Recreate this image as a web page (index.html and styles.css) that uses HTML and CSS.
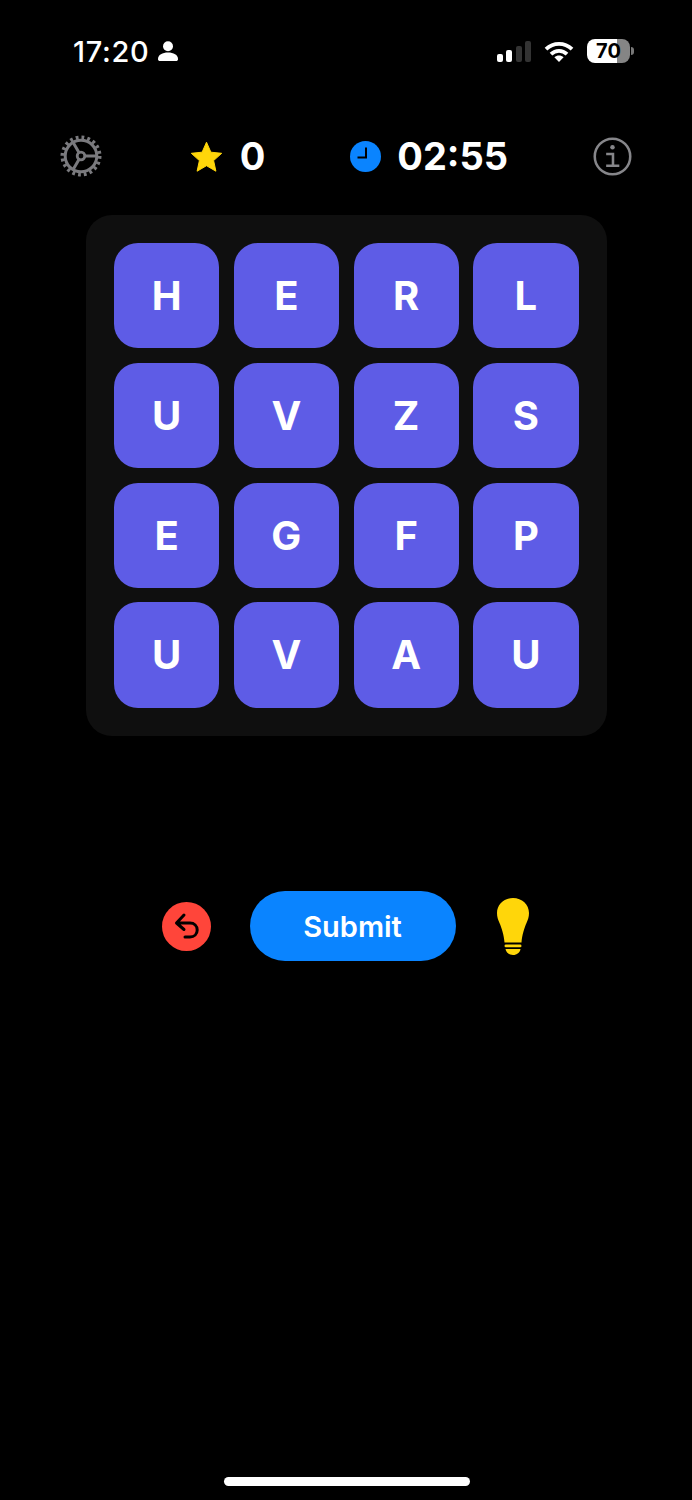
FILE: index.html
```html
<!DOCTYPE html>
<html lang="en">
<head>
    <meta charset="UTF-8">
    <meta name="viewport" content="width=device-width, initial-scale=1.0">
    <title>Word Grid</title>
    <link rel="stylesheet" href="styles.css">
</head>
<body>
    <div class="status-bar">
        <div class="status-left">
            <span class="clock-text">17:20</span>
            <svg class="person-icon" viewBox="0 0 20 20">
                <circle cx="10" cy="5.2" r="5"/>
                <path d="M0 18.2C0 13.8 4.500 11.600 10 11.600s10 2.200 10 6.600c0 1.200-.8 1.800-2 1.800H2c-1.200 0-2-.6-2-1.800z"/>
            </svg>
        </div>
        <div class="status-right">
            <div class="signal">
                <span class="bar bar-1"></span>
                <span class="bar bar-2"></span>
                <span class="bar bar-3 off"></span>
                <span class="bar bar-4 off"></span>
            </div>
            <svg class="wifi-icon" viewBox="0 0 30 21" fill="none" stroke="#fff" stroke-width="3.800">
                <path d="M2 8.200C9.400 1 20.600 1 28 8.200"/>
                <path d="M7 13.200c4.600-4.400 11.400-4.400 16 0"/>
                <path d="M15 21l-4.600-4.800c2.600-2.200 6.600-2.200 9.200 0z" fill="#fff" stroke="none"/>
            </svg>
            <div class="battery"><span>70</span></div>
            <span class="battery-nub"></span>
        </div>
    </div>

    <div class="game-header">
        <svg class="gear-icon" viewBox="0 0 42 42" fill="none" stroke="#7a7a7e">
            <circle cx="21" cy="21" r="18.600" stroke-width="3.800" stroke-dasharray="2.800 3.040"/>
            <circle cx="21" cy="21" r="15.800" stroke-width="3"/>
            <circle cx="21" cy="21" r="3.800" stroke-width="2.800"/>
            <path d="M24.800 21H36M19.100 17.700L13 7.200M19.100 24.300L13 34.800" stroke-width="3"/>
        </svg>
        <div class="stat">
            <svg class="star-icon" viewBox="0 0 33 31">
                <path d="M16.500 1.200L20.900 11.200 31.700 12.300 23.600 19.600 25.900 30.200 16.500 24.700 7.100 30.200 9.400 19.600 1.300 12.300 12.100 11.200z"/>
            </svg>
            <span class="stat-value">0</span>
        </div>
        <div class="stat timer">
            <svg class="timer-icon" viewBox="0 0 31 31">
                <circle cx="15.500" cy="15.500" r="15.500" fill="#0a84ff"/>
                <path d="M16 6.500v10H7.500" fill="none" stroke="#000" stroke-width="2"/>
            </svg>
            <span class="stat-value">02:55</span>
        </div>
        <svg class="info-icon" viewBox="0 0 40 40" fill="none" stroke="#86868a" stroke-width="2.600">
            <circle cx="20" cy="20" r="18.200"/>
            <circle cx="20" cy="10.500" r="2.300" fill="#86868a" stroke="none"/>
            <path d="M13.500 17.500h7v12M13.500 29.500h13.500"/>
        </svg>
    </div>

    <div class="board">
        <div class="tile">H</div>
        <div class="tile">E</div>
        <div class="tile">R</div>
        <div class="tile">L</div>
        <div class="tile">U</div>
        <div class="tile">V</div>
        <div class="tile">Z</div>
        <div class="tile">S</div>
        <div class="tile">E</div>
        <div class="tile">G</div>
        <div class="tile">F</div>
        <div class="tile">P</div>
        <div class="tile">U</div>
        <div class="tile">V</div>
        <div class="tile">A</div>
        <div class="tile">U</div>
    </div>

    <div class="actions">
        <svg class="undo-icon" viewBox="0 0 49 49">
            <circle cx="24.500" cy="24.500" r="24.500" fill="#ff453a"/>
            <path d="M22 13L14.500 21l7.500 6.500M14.500 21H28c4.200 0 7.200 3 7.200 7s-3 7-7.200 7H23" fill="none" stroke="#000" stroke-width="3" stroke-linecap="round" stroke-linejoin="round"/>
        </svg>
        <button class="submit-button">Submit</button>
        <svg class="bulb-icon" viewBox="0 0 32 57" fill="#ffd60a">
            <path d="M16 0C7 0 0 6.500 0 15c0 4 1 6.500 2.500 10 2 4.500 4.500 12 5 19.500h17c.5-7.500 3-15 5-19.500C31 21.500 32 19 32 15 32 6.500 25 0 16 0z"/>
            <rect x="7.500" y="46.500" width="17" height="2.800" rx="1.400"/>
            <path d="M8.500 51h15c-.6 3.500-3.500 6-7.500 6s-6.900-2.500-7.500-6z"/>
        </svg>
    </div>

    <div class="home-indicator"></div>
</body>
</html>
```

FILE: styles.css
```css
/* General Reset */
* {
    margin: 0;
    padding: 0;
    box-sizing: border-box;
}

body {
    font-family: Inter, "Liberation Sans", sans-serif;
    background-color: #000000;
    color: #ffffff;
    width: 692px;
    height: 1500px;
    display: flex;
    flex-direction: column;
    overflow: hidden;
}

/* Status Bar */
.status-bar {
    height: 135px;
    padding: 36px 58px 0 73px;
    display: flex;
    justify-content: space-between;
    align-items: flex-start;
}

.status-left {
    display: flex;
    align-items: center;
    gap: 8px;
    height: 30px;
}

.clock-text {
    font-size: 29px;
    font-weight: 500;
    letter-spacing: 0.7px;
}

.person-icon {
    width: 20px;
    height: 20px;
    fill: #ffffff;
}

.status-right {
    display: flex;
    align-items: center;
    height: 30px;
}

.signal {
    display: flex;
    align-items: flex-end;
    gap: 3.4px;
    height: 21px;
    margin-right: 13px;
}

.bar {
    width: 6px;
    background-color: #ffffff;
    border-radius: 2px;
}

.bar.off {
    background-color: #333333;
}

.bar-1 { height: 8px; }
.bar-2 { height: 12px; }
.bar-3 { height: 16px; }
.bar-4 { height: 21px; }

.wifi-icon {
    width: 30px;
    height: 21px;
    margin-right: 13px;
}

.battery {
    width: 43px;
    height: 24px;
    border-radius: 8px;
    background: linear-gradient(90deg, #ffffff 70%, #858585 70%);
    color: #000000;
    font-size: 20px;
    font-weight: 700;
    display: flex;
    align-items: center;
    justify-content: center;
}

.battery-nub {
    width: 3px;
    height: 8px;
    margin-left: 1px;
    background-color: #777777;
    border-radius: 0 3px 3px 0;
}

/* Header */
.game-header {
    display: flex;
    justify-content: space-between;
    align-items: center;
    height: 42px;
    padding: 0 60px;
}

.gear-icon {
    width: 42px;
    height: 42px;
    margin-right: 3px;
}

.stat {
    display: flex;
    align-items: center;
    gap: 17px;
}

.stat.timer {
    gap: 16px;
}

.stat-value {
    font-size: 38px;
    font-weight: 700;
}

.star-icon {
    width: 33px;
    height: 31px;
    fill: #ffd60a;
    stroke: #ffd60a;
    stroke-width: 1;
    stroke-linejoin: round;
}

.timer-icon {
    width: 31px;
    height: 31px;
}

.info-icon {
    width: 39px;
    height: 39px;
}

/* Board */
.board {
    width: 520.5px;
    height: 520.5px;
    margin: 38px 0 0 86px;
    padding: 28px;
    background-color: #0f0f0f;
    border-radius: 26px;
    display: grid;
    grid-template-columns: repeat(4, 1fr);
    grid-template-rows: repeat(4, 1fr);
    gap: 14.6px;
}

.tile {
    background-color: #5e5ce6;
    border-radius: 24px;
    display: flex;
    align-items: center;
    justify-content: center;
    font-size: 40px;
    font-weight: 700;
}

/* Actions */
.actions {
    display: flex;
    justify-content: center;
    align-items: center;
    gap: 39px;
    height: 70px;
    margin-top: 155.5px;
    padding-right: 2px;
}

.undo-icon {
    width: 49px;
    height: 49px;
}

.submit-button {
    width: 206px;
    height: 70px;
    border: none;
    border-radius: 35px;
    background-color: #0a84ff;
    color: #ffffff;
    font-family: inherit;
    font-size: 29px;
    font-weight: 600;
}

.bulb-icon {
    width: 32px;
    height: 57px;
    margin-left: 2px;
}

/* Home Indicator */
.home-indicator {
    width: 246px;
    height: 9px;
    margin: auto 0 14px 224px;
    background-color: #ffffff;
    border-radius: 5px;
}
```
